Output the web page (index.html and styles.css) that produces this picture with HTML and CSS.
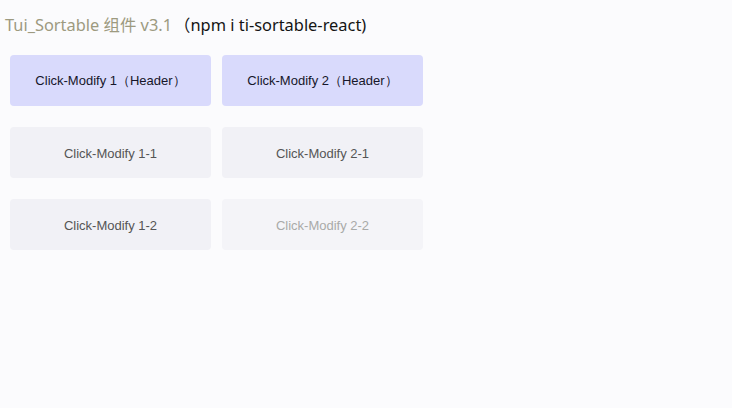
FILE: index.html
```html
<!DOCTYPE html>
<html>
<head>
<meta charset="utf-8">
<link rel="stylesheet" href="styles.css">
</head>
<body>
<h1 class="title"><span class="name">Tui_Sortable 组件 v3.1</span><span class="npm">（npm i ti-sortable-react)</span></h1>
<div class="grid">
  <div class="cell head">Click-Modify 1（Header）</div>
  <div class="cell head">Click-Modify 2（Header）</div>
  <div class="cell item">Click-Modify 1-1</div>
  <div class="cell item">Click-Modify 2-1</div>
  <div class="cell item">Click-Modify 1-2</div>
  <div class="cell item faded">Click-Modify 2-2</div>
</div>
</body>
</html>
```
FILE: styles.css
```css
html, body {
  margin: 0;
  background: #fbfbfd;
}
body {
  font-family: "Liberation Sans", Arial, sans-serif;
}
.title {
  margin: 0;
  padding: 14px 0 0 5px;
  height: 42px;
  box-sizing: border-box;
  font-family: "Noto Sans", "Noto Sans CJK SC", sans-serif;
  font-weight: normal;
  font-size: 16.4px;
  line-height: 22px;
  white-space: nowrap;
}
.name {
  color: #9d9a80;
}
.npm {
  color: #141414;
  margin-left: 2px;
}
.grid {
  display: grid;
  grid-template-columns: 201px 201px;
  grid-auto-rows: 51px;
  column-gap: 11px;
  row-gap: 21px;
  padding: 13px 0 0 10px;
}
.cell {
  display: flex;
  align-items: center;
  justify-content: center;
  border-radius: 4px;
  font-size: 13px;
  padding-top: 1px;
  box-sizing: border-box;
  white-space: nowrap;
}
.head {
  background: #d9dafc;
  color: #16162a;
}
.item {
  background: #f1f1f6;
  color: #555555;
}
.faded {
  background: #f4f4f8;
  color: #a9aaa8;
}
```
